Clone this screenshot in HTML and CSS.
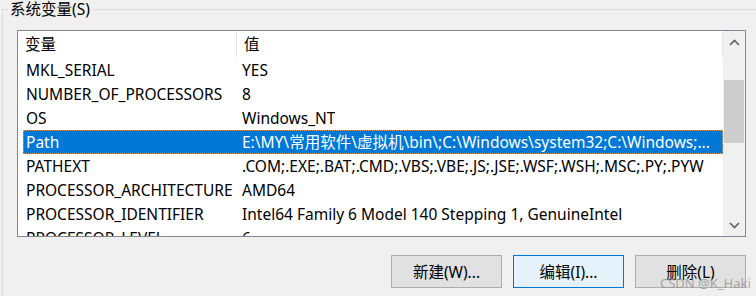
FILE: index.html
```html
<!DOCTYPE html>
<html lang="zh-CN">
<head>
<meta charset="utf-8">
<title>系统变量</title>
<link rel="stylesheet" href="styles.css">
</head>
<body>
<fieldset class="group">
  <legend class="group-title">系统变量(S)</legend>
  <div class="listbox">
    <div class="list-main">
      <div class="list-header">
        <div class="hcol hcol-name">变量</div>
        <div class="hcol hcol-value">值</div>
        <div class="hcol-rest"></div>
      </div>
      <div class="rows">
        <div class="row"><span class="c-name">MKL_SERIAL</span><span class="c-value">YES</span></div>
        <div class="row"><span class="c-name">NUMBER_OF_PROCESSORS</span><span class="c-value">8</span></div>
        <div class="row"><span class="c-name">OS</span><span class="c-value">Windows_NT</span></div>
        <div class="row selected"><span class="c-name">Path</span><span class="c-value">E:\MY\常用软件\虚拟机\bin\;C:\Windows\system32;C:\Windows;...</span></div>
        <div class="row"><span class="c-name">PATHEXT</span><span class="c-value">.COM;.EXE;.BAT;.CMD;.VBS;.VBE;.JS;.JSE;.WSF;.WSH;.MSC;.PY;.PYW</span></div>
        <div class="row"><span class="c-name">PROCESSOR_ARCHITECTURE</span><span class="c-value">AMD64</span></div>
        <div class="row"><span class="c-name">PROCESSOR_IDENTIFIER</span><span class="c-value">Intel64 Family 6 Model 140 Stepping 1, GenuineIntel</span></div>
        <div class="row"><span class="c-name">PROCESSOR_LEVEL</span><span class="c-value">6</span></div>
      </div>
    </div>
    <div class="scrollbar">
      <div class="sb-btn sb-up">
        <svg width="11" height="7" viewBox="0 0 11 7"><path d="M1 6 L5.5 1.5 L10 6" fill="none" stroke="#606060" stroke-width="1.6"/></svg>
      </div>
      <div class="sb-track"><div class="sb-thumb"></div></div>
      <div class="sb-btn sb-down">
        <svg width="11" height="7" viewBox="0 0 11 7"><path d="M1 1 L5.5 5.5 L10 1" fill="none" stroke="#606060" stroke-width="1.6"/></svg>
      </div>
    </div>
  </div>
  <div class="buttons">
    <button class="btn">新建(W)...</button>
    <button class="btn btn-default">编辑(I)...</button>
    <button class="btn">删除(L)</button>
  </div>
</fieldset>
<div class="watermark">CSDN @K_Haki</div>
</body>
</html>
```
FILE: styles.css
```css
html, body {
  margin: 0;
  padding: 0;
}
body {
  width: 756px;
  height: 296px;
  overflow: hidden;
  background: #f0f0f0;
  font-family: "Noto Sans", "Noto Sans CJK SC", sans-serif;
  font-size: 15.5px;
  color: #000;
  display: flex;
  flex-direction: column;
  position: relative;
}
.group {
  flex: 1;
  margin: 0 0 0 2px;
  padding: 0 0 0 14px;
  border: 1px solid #dcdcdc;
  border-right: none;
  border-bottom: none;
  min-width: 0;
}
.group-title {
  padding: 0 2px;
  margin-left: -9px;
  line-height: 18px;
}
.listbox {
  margin-top: 12px;
  width: 727px;
  height: 205px;
  border: 1px solid #828790;
  background: #fff;
  display: flex;
  overflow: hidden;
}
.list-main {
  flex: 1;
  min-width: 0;
  overflow: hidden;
}
.list-header {
  display: flex;
  height: 27px;
  align-items: center;
}
.hcol {
  height: 25px;
  line-height: 25px;
  padding-left: 7px;
  box-sizing: border-box;
  border-right: 1px solid #e5e5e5;
  white-space: nowrap;
}
.hcol-name { width: 219px; }
.hcol-value { width: 486px; }
.hcol-rest { flex: 1; }
.rows {
  padding-left: 5px;
}
.row {
  display: flex;
  height: 24px;
  line-height: 23px;
  white-space: nowrap;
  box-sizing: border-box;
  border: 1px solid transparent;
}
.row.selected {
  background: #0078d7;
  color: #fff;
  border: 1px dotted #e8a060;
}
.c-name {
  width: 216px;
  padding-left: 2px;
  flex: none;
}
.c-value {
  padding-left: 0;
  overflow: hidden;
}
.scrollbar {
  width: 22px;
  flex: none;
  background: #f0f0f0;
  display: flex;
  flex-direction: column;
}
.sb-btn {
  display: flex;
  align-items: center;
  justify-content: center;
}
.sb-up { height: 23px; }
.sb-down { height: 22px; }
.sb-track {
  flex: 1;
  padding: 26px 1px 0 1px;
}
.sb-thumb {
  height: 63px;
  background: #cdcdcd;
}
.buttons {
  margin-top: 18px;
  width: 729px;
  display: flex;
  justify-content: flex-end;
  gap: 11px;
}
.btn {
  width: 111px;
  height: 33px;
  border: 1px solid #adadad;
  background: #e1e1e1;
  font-family: "Noto Sans", "Noto Sans CJK SC", sans-serif;
  font-size: 15.5px;
  color: #000;
  padding: 0;
}
.btn-default {
  border-color: #0078d7;
  background: #e5f1fb;
}
.watermark {
  position: absolute;
  left: 660px;
  top: 274px;
  font-family: "Noto Sans", sans-serif;
  font-size: 13px;
  color: rgba(150, 150, 150, 0.85);
  white-space: nowrap;
}
```
